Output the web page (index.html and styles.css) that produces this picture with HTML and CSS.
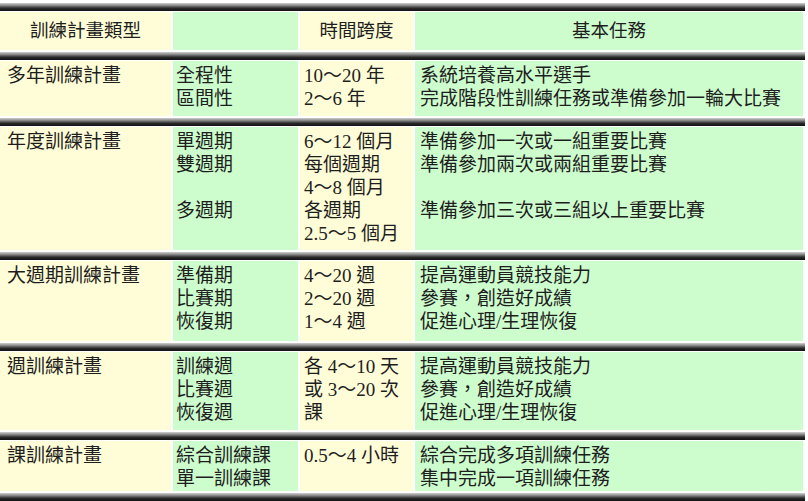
FILE: index.html
```html
<!DOCTYPE html>
<html lang="zh-Hant">
<head>
<meta charset="utf-8">
<title>訓練計畫類型</title>
<link rel="stylesheet" href="styles.css">
</head>
<body>
<div class="table">
  <div class="bar"></div>
  <div class="row head">
    <div class="cell cream center">訓練計畫類型</div>
    <div class="cell green"></div>
    <div class="cell cream center">時間跨度</div>
    <div class="cell green center">基本任務</div>
  </div>

  <div class="bar"></div>
  <div class="row r1">
    <div class="cell cream">多年訓練計畫</div>
    <div class="cell green">全程性<br>區間性</div>
    <div class="cell cream">10～20 年<br>2～6 年</div>
    <div class="cell green">系統培養高水平選手<br>完成階段性訓練任務或準備參加一輪大比賽</div>
  </div>

  <div class="bar"></div>
  <div class="row r2">
    <div class="cell cream">年度訓練計畫</div>
    <div class="cell green">單週期<br>雙週期<br>&nbsp;<br>多週期</div>
    <div class="cell cream">6～12 個月<br>每個週期<br>4～8 個月<br>各週期<br>2.5～5 個月</div>
    <div class="cell green">準備參加一次或一組重要比賽<br>準備參加兩次或兩組重要比賽<br>&nbsp;<br>準備參加三次或三組以上重要比賽</div>
  </div>

  <div class="bar"></div>
  <div class="row r3">
    <div class="cell cream">大週期訓練計畫</div>
    <div class="cell green">準備期<br>比賽期<br>恢復期</div>
    <div class="cell cream">4～20 週<br>2～20 週<br>1～4 週</div>
    <div class="cell green">提高運動員競技能力<br>參賽，創造好成績<br>促進心理/生理恢復</div>
  </div>

  <div class="bar"></div>
  <div class="row r4">
    <div class="cell cream">週訓練計畫</div>
    <div class="cell green">訓練週<br>比賽週<br>恢復週</div>
    <div class="cell cream">各 4～10 天<br>或 3～20 次<br>課</div>
    <div class="cell green">提高運動員競技能力<br>參賽，創造好成績<br>促進心理/生理恢復</div>
  </div>

  <div class="bar"></div>
  <div class="row r5">
    <div class="cell cream">課訓練計畫</div>
    <div class="cell green">綜合訓練課<br>單一訓練課</div>
    <div class="cell cream">0.5～4 小時</div>
    <div class="cell green">綜合完成多項訓練任務<br>集中完成一項訓練任務</div>
  </div>
  <div class="bar last"></div>
</div>
</body>
</html>
```

FILE: styles.css
```css
html, body {
  margin: 0;
  padding: 0;
  background: #ffffff;
}

body {
  font-family: "Liberation Serif", "Noto Sans CJK TC", serif;
  font-size: 19px;
  color: #1e1e1e;
}

.table {
  width: 805px;
  padding-top: 3px;
  display: flex;
  flex-direction: column;
}

.bar {
  height: 8px;
  width: 805px;
  margin-bottom: 1px;
  background: linear-gradient(to bottom, #d0d0d0 0%, #8a8a8a 30%, #2a2a2a 65%, #111111 100%);
}

.bar.last {
  margin-bottom: 0;
}

.row {
  width: 803px;
  display: grid;
  grid-template-columns: 171px 125px 113px 1fr;
  column-gap: 2px;
  margin-bottom: 2px;
}

.cell {
  line-height: 23px;
  padding: 3px 0 0 7px;
  white-space: nowrap;
}

.cream {
  background: #fffdd7;
}

.green {
  background: #cdfccd;
}

.cell.center {
  padding: 0;
  display: flex;
  align-items: center;
  justify-content: center;
}

.row.head {
  height: 38px;
}

.row.head .cell {
  font-size: 18.5px;
}

.row .cell:nth-child(2) {
  padding-left: 3px;
}

.row .cell:nth-child(3) {
  padding-left: 4px;
}

.row .cell:nth-child(4) {
  padding-left: 5px;
}

.row.head .cell {
  padding: 0;
}

.r1 { height: 55px; }
.r2 { height: 123px; }
.r3 { height: 80px; }
.r4 { height: 78px; }
.r5 { height: 50px; }
```
